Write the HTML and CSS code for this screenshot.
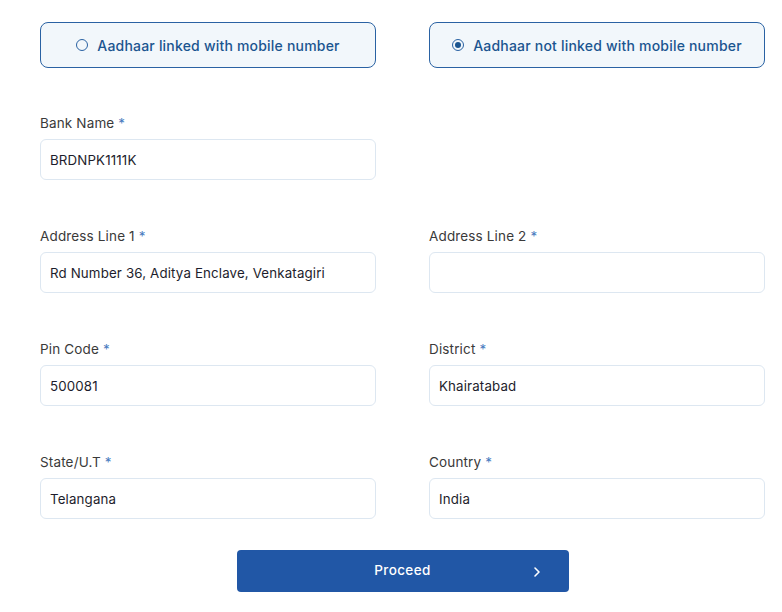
FILE: index.html
```html
<!DOCTYPE html>
<html>
<head>
<meta charset="utf-8">
<link rel="stylesheet" href="styles.css">
</head>
<body>
<div class="page">
  <div class="choices">
    <label class="choice">
      <span class="radio"></span>
      <span>Aadhaar linked with mobile number</span>
    </label>
    <label class="choice">
      <span class="radio checked"></span>
      <span>Aadhaar not linked with mobile number</span>
    </label>
  </div>

  <div class="grid">
    <div class="field">
      <div class="label">Bank Name <span class="req">*</span></div>
      <div class="input">BRDNPK1111K</div>
    </div>
    <div></div>

    <div class="field">
      <div class="label">Address Line 1 <span class="req">*</span></div>
      <div class="input">Rd Number 36, Aditya Enclave, Venkatagiri</div>
    </div>
    <div class="field">
      <div class="label">Address Line 2 <span class="req">*</span></div>
      <div class="input"></div>
    </div>

    <div class="field">
      <div class="label">Pin Code <span class="req">*</span></div>
      <div class="input">500081</div>
    </div>
    <div class="field">
      <div class="label">District <span class="req">*</span></div>
      <div class="input">Khairatabad</div>
    </div>

    <div class="field">
      <div class="label">State/U.T <span class="req">*</span></div>
      <div class="input">Telangana</div>
    </div>
    <div class="field">
      <div class="label">Country <span class="req">*</span></div>
      <div class="input">India</div>
    </div>
  </div>

  <div class="actions">
    <button class="proceed">
      <span>Proceed</span>
      <svg class="chev" width="10" height="12" viewBox="0 0 10 12"><path d="M3 2 L7 6 L3 10" fill="none" stroke="#fff" stroke-width="1.6" stroke-linecap="round" stroke-linejoin="round"/></svg>
    </button>
  </div>
</div>
</body>
</html>
```

FILE: styles.css
```css
* { box-sizing: border-box; }
html, body { margin: 0; padding: 0; background: #fff; }
body { font-family: Inter, "Open Sans", "Liberation Sans", sans-serif; }

.page {
  width: 725px;
  margin-left: 40px;
  padding-top: 22px;
}

.choices {
  display: grid;
  grid-template-columns: 336px 336px;
  column-gap: 53px;
}

.choice {
  height: 46px;
  border: 1px solid #2a62a3;
  border-radius: 8px;
  background: #f2f7fb;
  display: flex;
  align-items: center;
  justify-content: center;
  gap: 9px;
  color: #1b5590;
  font-size: 14px;
  font-weight: 500;
  letter-spacing: 0.2px;
}

.radio {
  width: 12px;
  height: 12px;
  border: 1.5px solid #2a62a3;
  border-radius: 50%;
  display: inline-block;
  position: relative;
}
.radio.checked::after {
  content: "";
  position: absolute;
  left: 1.5px; top: 1.5px;
  width: 6px; height: 6px;
  border-radius: 50%;
  background: #1b5590;
}

.grid {
  display: grid;
  grid-template-columns: 336px 336px;
  column-gap: 53px;
  row-gap: 46px;
  margin-top: 45px;
}

.label {
  height: 20px;
  line-height: 20px;
  font-size: 13.5px;
  color: #3a3a3a;
  margin-bottom: 6px;
  letter-spacing: 0.15px;
}
.req { color: #4a7cc0; }

.input {
  height: 41px;
  border: 1px solid #dde7f1;
  border-radius: 6px;
  padding: 0 9px;
  display: flex;
  align-items: center;
  font-size: 13.3px;
  color: #1d1d2c;
  letter-spacing: 0.15px;
}

.actions {
  display: flex;
  justify-content: center;
  margin-top: 31px;
}

.proceed {
  width: 332px;
  height: 42px;
  background: #2157a6;
  border: none;
  border-radius: 4px;
  color: #fff;
  font-family: inherit;
  font-size: 13.5px;
  font-weight: 500;
  letter-spacing: 0.4px;
  position: relative;
  display: flex;
  align-items: center;
  justify-content: center;
  padding: 0 0 2px 0;
}
.chev {
  position: absolute;
  right: 27px;
  top: 16px;
}
```
